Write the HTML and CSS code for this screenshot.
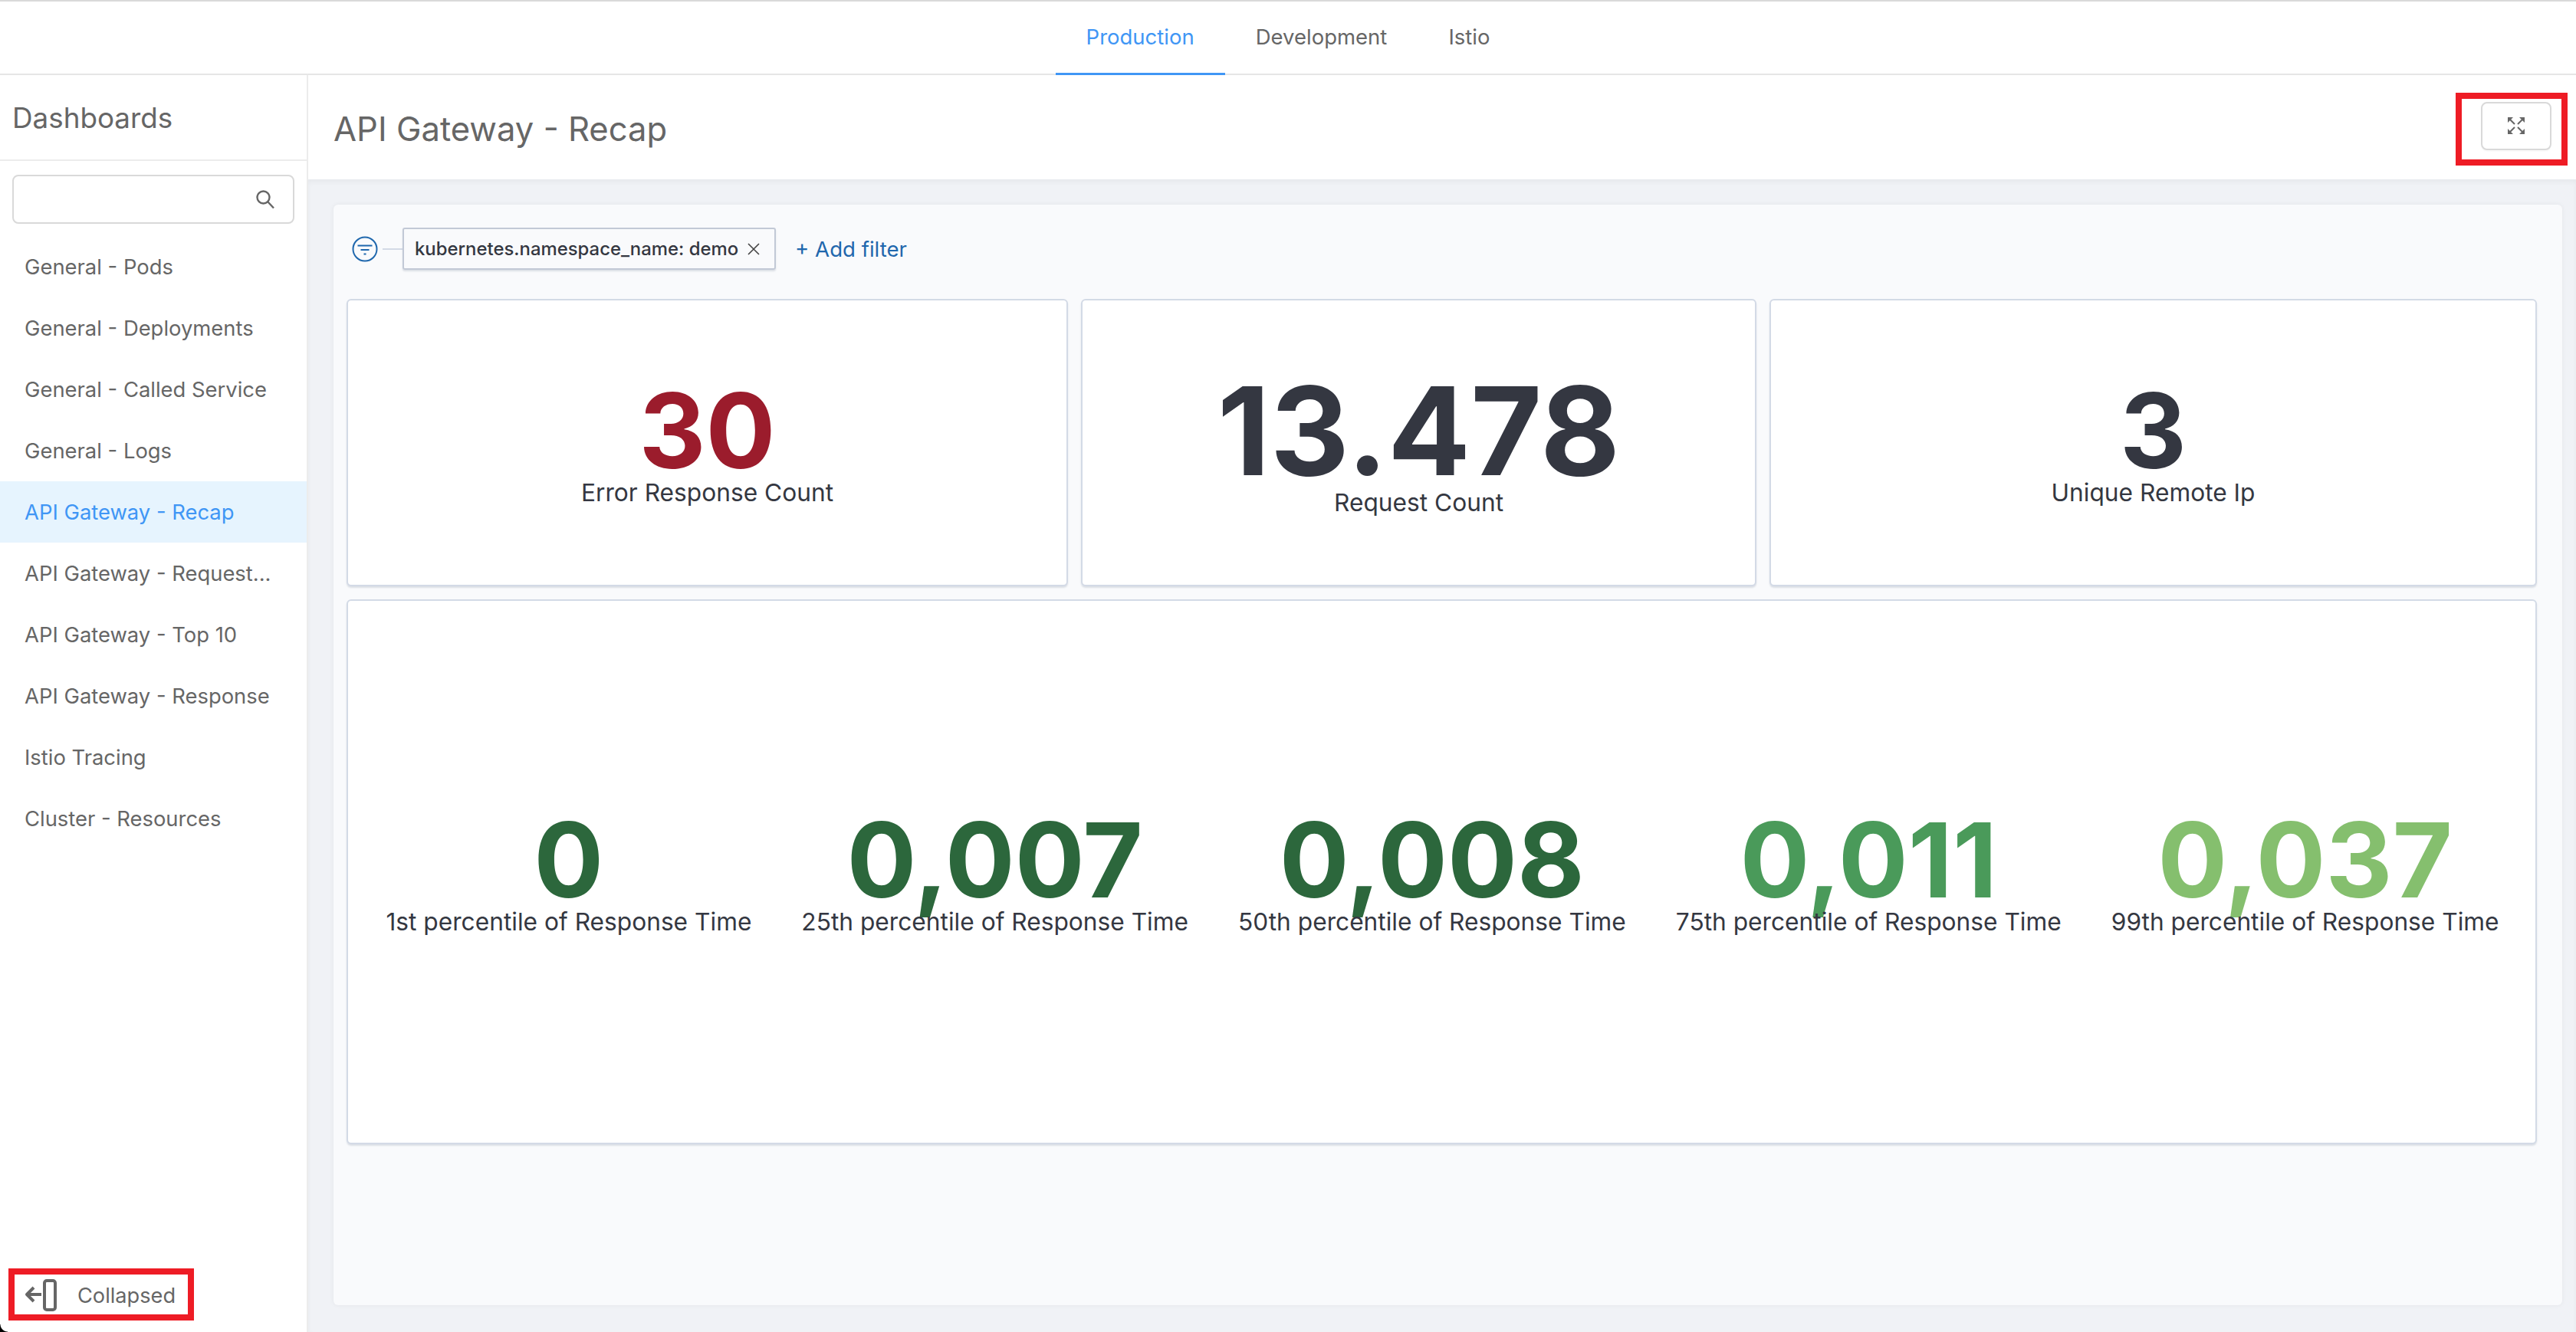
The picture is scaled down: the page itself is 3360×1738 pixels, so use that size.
FILE: index.html
```html
<!DOCTYPE html>
<html>
<head>
    <title>Dashboards</title>
    <meta name="viewport" content="width=device-width, initial-scale=1">
    <link rel="stylesheet" href="styles.css">
</head>
<body>
    <div class="tabs">
        <div class="tab active">Production</div>
        <div class="tab">Development</div>
        <div class="tab">Istio</div>
    </div>
    <div class="layout">
        <div class="sidebar">
            <div class="sidebar-title">Dashboards</div>
            <div class="search">
                <svg width="28" height="28" viewBox="0 0 28 28" fill="none" stroke="#666" stroke-width="2.4"><circle cx="11.5" cy="11.5" r="8"/><path d="M17.5 17.5L25 25.5"/></svg>
            </div>
            <div class="menu">
                <div class="menu-item">General - Pods</div>
                <div class="menu-item">General - Deployments</div>
                <div class="menu-item">General - Called Service</div>
                <div class="menu-item">General - Logs</div>
                <div class="menu-item selected">API Gateway - Recap</div>
                <div class="menu-item">API Gateway - Request...</div>
                <div class="menu-item">API Gateway - Top 10</div>
                <div class="menu-item">API Gateway - Response</div>
                <div class="menu-item">Istio Tracing</div>
                <div class="menu-item">Cluster - Resources</div>
            </div>
            <div class="collapse">
                <svg width="42" height="42" viewBox="0 0 42 42" fill="none" stroke="#666" stroke-width="4"><path d="M22 20H4M12 11L3 20L12 29" stroke-linejoin="round"/><rect x="26" y="2" width="14" height="38" rx="3"/></svg>
                <span>Collapsed</span>
            </div>
        </div>
        <div class="main">
            <div class="main-header">
                <h1>API Gateway - Recap</h1>
                <button class="expand">
                    <svg width="22" height="22" viewBox="0 0 22 22" fill="#666" stroke="#666" stroke-width="2"><path d="M0 0h7L0 7zM22 0v7L15 0zM0 22v-7l7 7zM22 22h-7l7-7z" stroke="none"/><path d="M3 3l6 6M19 3l-6 6M3 19l6-6M19 19l-6-6" fill="none"/></svg>
                </button>
            </div>
            <div class="content">
                <div class="panel">
                    <div class="filters">
                        <svg width="34" height="34" viewBox="0 0 34 34" fill="none" stroke="#1f67ad" stroke-width="2"><circle cx="17" cy="17" r="15.500"/><path d="M7.500 12.500h19M11.500 18h11M15.500 23.500h3"/></svg>
                        <span class="filter-line"></span>
                        <div class="filter-pill">
                            <span>kubernetes.namespace_name: demo</span>
                            <svg width="18" height="18" viewBox="0 0 18 18" stroke="#444" stroke-width="1.600"><path d="M2 2l14 14M16 2L2 16"/></svg>
                        </div>
                        <span class="add-filter">+ Add filter</span>
                    </div>
                    <div class="metrics-row">
                        <div class="card col-a">
                            <div class="metric">
                                <div class="value red size-m">30</div>
                                <div class="label">Error Response Count</div>
                            </div>
                        </div>
                        <div class="card col-b">
                            <div class="metric">
                                <div class="value dark size-l">13.478</div>
                                <div class="label">Request Count</div>
                            </div>
                        </div>
                        <div class="card col-c">
                            <div class="metric">
                                <div class="value dark size-m">3</div>
                                <div class="label">Unique Remote Ip</div>
                            </div>
                        </div>
                    </div>
                    <div class="card card-wide">
                        <div class="metric">
                            <div class="value green1 size-m">0</div>
                            <div class="label">1st percentile of Response Time</div>
                        </div>
                        <div class="metric">
                            <div class="value green1 size-m">0,007</div>
                            <div class="label">25th percentile of Response Time</div>
                        </div>
                        <div class="metric">
                            <div class="value green1 size-m">0,008</div>
                            <div class="label">50th percentile of Response Time</div>
                        </div>
                        <div class="metric">
                            <div class="value green2 size-m">0,011</div>
                            <div class="label">75th percentile of Response Time</div>
                        </div>
                        <div class="metric">
                            <div class="value green3 size-m">0,037</div>
                            <div class="label">99th percentile of Response Time</div>
                        </div>
                    </div>
                </div>
            </div>
        </div>
    </div>
    <div class="redbox redbox-top"></div>
    <div class="redbox redbox-bottom"></div>
    <div class="corner"></div>
</body>
</html>
```
FILE: styles.css
```css
* {
    box-sizing: border-box;
}
html, body {
    height: 100%;
}
body {
    margin: 0;
    font-family: Inter, "Noto Sans", sans-serif;
    color: #666;
    background-color: white;
    overflow: hidden;
    position: relative;
}
.tabs {
    height: 98px;
    border-top: 2px solid #d9d9d9;
    border-bottom: 2px solid #e6e6e6;
    display: flex;
    justify-content: center;
}
.tab {
    font-size: 27.5px;
    line-height: 92px;
    padding: 0 40px;
    margin-bottom: -2px;
}
.tab.active {
    color: #4096f5;
    border-bottom: 3px solid #4096f5;
}
.layout {
    display: flex;
    height: 1640px;
}
.sidebar {
    width: 402px;
    border-right: 2px solid #ececec;
    display: flex;
    flex-direction: column;
}
.sidebar-title {
    height: 112px;
    border-bottom: 2px solid #ececec;
    padding-left: 16px;
    font-size: 36.8px;
    line-height: 112px;
}
.search {
    width: 368px;
    height: 64px;
    margin: 18px 0 16px 16px;
    border: 2px solid #d9d9d9;
    border-radius: 8px;
    display: flex;
    align-items: center;
    justify-content: flex-end;
    padding-right: 22px;
}
.menu {
    flex: 1;
}
.menu-item {
    height: 80px;
    line-height: 80px;
    padding-left: 32px;
    font-size: 27.4px;
}
.menu-item.selected {
    background-color: #e6f4fe;
    color: #4096f5;
}
.collapse {
    height: 88px;
    display: flex;
    align-items: center;
    padding: 0 0 8px 32px;
    gap: 27px;
    font-size: 27.2px;
}
.main {
    flex: 1;
    display: flex;
    flex-direction: column;
    min-width: 0;
}
.main-header {
    height: 136px;
    display: flex;
    align-items: center;
    justify-content: space-between;
    padding: 0 32px 0 33px;
}
.main-header h1 {
    margin: 4px 0 0;
    font-size: 43.6px;
    font-weight: 400;
}
.expand {
    width: 92px;
    height: 63px;
    margin-bottom: 4px;
    padding: 0;
    background-color: white;
    border: 2px solid #d9d9d9;
    border-radius: 8px;
    box-shadow: 0 2px 0 rgba(0,0,0,0.02);
    display: flex;
    align-items: center;
    justify-content: center;
}
.content {
    flex: 1;
    background-color: #f0f2f6;
    padding: 33px 18px 35px 33px;
    box-shadow: inset 0 4px 6px rgba(0,0,0,0.04);
}
.panel {
    height: 100%;
    background-color: #f9fafc;
    border-radius: 6px;
    box-shadow: 0 0 6px rgba(0,0,0,0.06);
    padding: 0 33px 0 17px;
}
.filters {
    height: 123px;
    display: flex;
    align-items: center;
    padding: 0 0 8px 7px;
}
.filter-line {
    width: 26px;
    height: 2px;
    margin-left: 6px;
    background-color: #d3dae6;
}
.filter-pill {
    height: 55px;
    padding: 0 18px 0 14px;
    display: flex;
    align-items: center;
    gap: 11px;
    border: 2px solid #c2c9d6;
    border-radius: 3px;
    box-shadow: 0 2px 2px rgba(152,162,179,0.3);
    font-size: 23.9px;
    font-weight: 500;
    color: #343741;
}
.add-filter {
    margin-left: 25px;
    font-size: 27.6px;
    color: #1f67ad;
}
.metrics-row {
    display: grid;
    grid-template-columns: 941px 881px 1001px;
    gap: 17px;
    height: 375px;
}
.card {
    background-color: white;
    border: 2px solid #d3dae6;
    border-radius: 6px;
    box-shadow: 0 2px 2px rgba(152,162,179,0.3);
    display: flex;
    align-items: center;
    justify-content: center;
}
.card-wide {
    margin-top: 17px;
    height: 711px;
    gap: 65px;
    padding-left: 2px;
}
.metric {
    display: flex;
    flex-direction: column;
    align-items: center;
    white-space: nowrap;
}
.value {
    font-weight: 700;
    padding-top: 8px;
}
.size-m {
    font-size: 135px;
    line-height: 121px;
}
.size-l {
    font-size: 160px;
    line-height: 148px;
}
.label {
    font-size: 31.7px;
    color: #343741;
}
.red {
    color: #9b1c2c;
}
.dark {
    color: #343741;
}
.green1 {
    color: #2c673c;
}
.green2 {
    color: #4a9a5a;
}
.green3 {
    color: #85bf6e;
}
.redbox {
    position: absolute;
    border: 8px solid #ee1c25;
}
.redbox-top {
    left: 3203px;
    top: 121px;
    width: 146px;
    height: 95px;
}
.redbox-bottom {
    left: 11px;
    top: 1655px;
    width: 242px;
    height: 68px;
}
.corner {
    position: absolute;
    left: 0;
    bottom: 0;
    width: 10px;
    height: 10px;
    background: radial-gradient(circle at 100% 0, transparent 9px, #000 10px);
}
```
